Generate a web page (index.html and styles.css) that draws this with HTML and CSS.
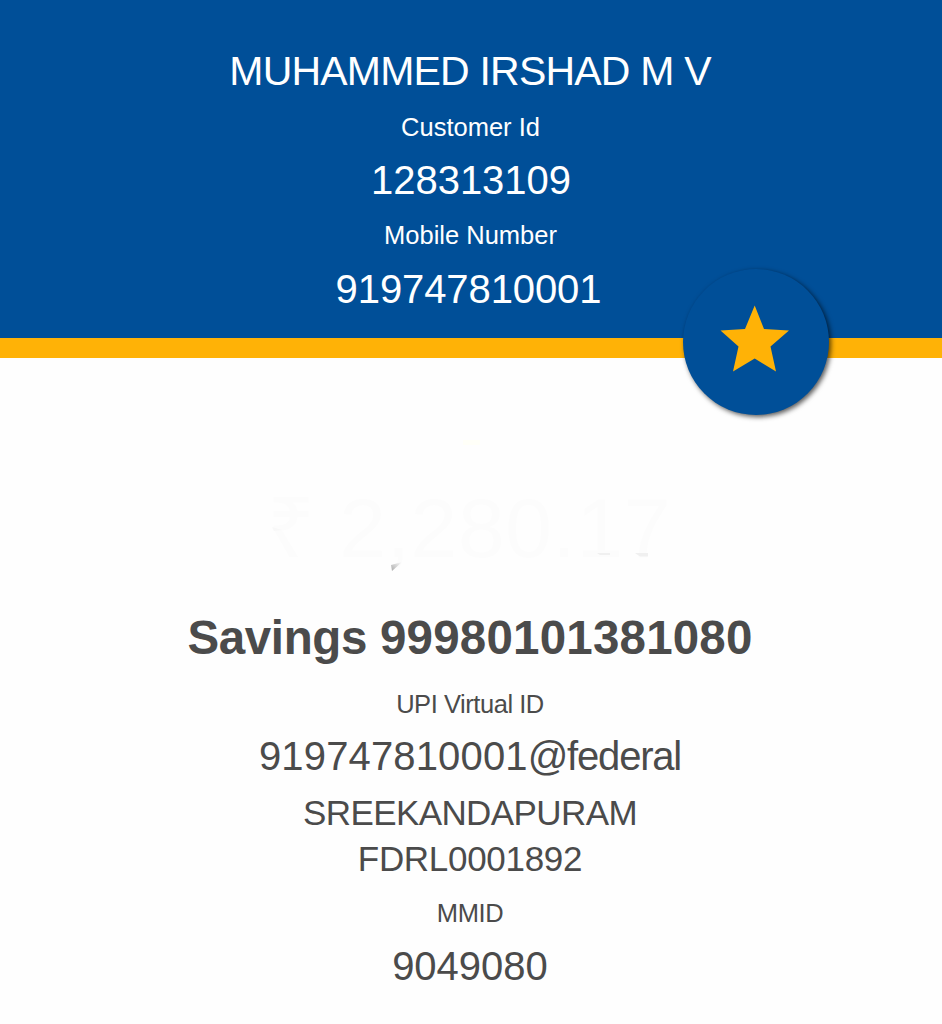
FILE: index.html
```html
<!DOCTYPE html>
<html lang="en">
<head>
<meta charset="utf-8">
<title>Account</title>
<link rel="stylesheet" href="styles.css">
</head>
<body>
<header class="profile">
<h1 class="name">MUHAMMED IRSHAD M V</h1>
<p class="label">Customer Id</p>
<p class="value customer">128313109</p>
<p class="label">Mobile Number</p>
<p class="value mobile">919747810001</p>
<button class="fav" aria-label="Favourite"><svg viewBox="0 0 146 146"><path d="M71.700 36.500L81 60L106 61.500L87.500 77.500L93 102.500L71.700 89.500L50 102.500L55.500 77.500L37.500 61.500L62 60Z"/></svg></button>
</header>
<main class="account">
<div class="balance">
<p class="amount">₹ 2,280.17</p>
<svg class="marks" viewBox="0 0 440 190"><defs><linearGradient id="fade" x1="0" y1="1" x2="1" y2="0"><stop offset="0" stop-color="#aaa"/><stop offset="1" stop-color="#fefefe"/></linearGradient></defs><path d="M141 165L152 162L142 171Z" fill="url(#fade)"/><path d="M347 153H360V155H350ZM385 153H398V156.500H390Z" fill="#f0f0f0"/><path d="M213 40H230V45H213Z" fill="#fffff8"/><path d="M22 127L32 130L24 131Z" fill="#f8f8f8"/></svg>
</div>
<h2 class="number"><span class="kind">Savings </span>99980101381080</h2>
<p class="label upi">UPI Virtual ID</p>
<p class="value vpa">919747810001<span class="bank">@federal</span></p>
<p class="branch place">SREEKANDAPURAM</p>
<p class="branch">FDRL0001892</p>
<p class="label mmid">MMID</p>
<p class="value">9049080</p>
</main>
</body>
</html>
```
FILE: styles.css
```css
* { box-sizing: border-box; margin: 0; }
body { width: 942px; height: 1024px; overflow: hidden; background: #fefefe; color: #4b4b4b; font-family: "Liberation Sans", Arial, sans-serif; text-align: center; }
.profile { position: relative; height: 358px; padding-top: 46px; background: #004f98; border-bottom: 20px solid #ffb206; color: #fff; }
.name { height: 52px; padding-right: 2px; font-size: 41px; font-weight: 400; line-height: 51px; letter-spacing: -0.8px; }
.label { height: 30px; margin-top: 14px; padding-right: 1px; font-size: 25.5px; line-height: 30px; }
.value { height: 50px; margin-top: 14px; padding-right: 2px; font-size: 40px; line-height: 48px; }
.value.customer { padding-right: 0; }
.value.mobile { padding-right: 5px; line-height: 50px; letter-spacing: -0.1px; }
.fav { position: absolute; left: 683px; top: 269px; width: 146px; height: 146px; padding: 0; border: 0; border-radius: 50%; background: #004f98; box-shadow: 2px 2px 5px rgba(0,0,0,.65); }
.fav svg { display: block; width: 146px; height: 146px; fill: #ffb206; }
.balance { position: relative; height: 220px; padding-top: 120px; }
.amount { height: 100px; padding-right: 4px; font-size: 84px; line-height: 100px; letter-spacing: 0.6px; color: #fcfcfc; }
.marks { position: absolute; left: 250px; top: 42px; width: 440px; height: 190px; }
.number { height: 60px; margin-top: 29px; padding-right: 2px; font-size: 47.5px; line-height: 61px; letter-spacing: 0.2px; }
.kind { letter-spacing: -0.35px; }
.label.upi { margin-top: 22px; padding-right: 2px; letter-spacing: -0.45px; }
.value.vpa { margin-top: 13px; line-height: 49px; letter-spacing: 0.15px; }
.bank { letter-spacing: -1.2px; }
.branch { height: 46px; padding-right: 2px; font-size: 35px; line-height: 44px; letter-spacing: -0.3px; }
.branch.place { margin-top: 9px; letter-spacing: -0.6px; }
.label.mmid { margin-top: 16px; padding-right: 2px; line-height: 29px; letter-spacing: -0.4px; }
.mmid + .value { margin-top: 13px; line-height: 48px; }
```
